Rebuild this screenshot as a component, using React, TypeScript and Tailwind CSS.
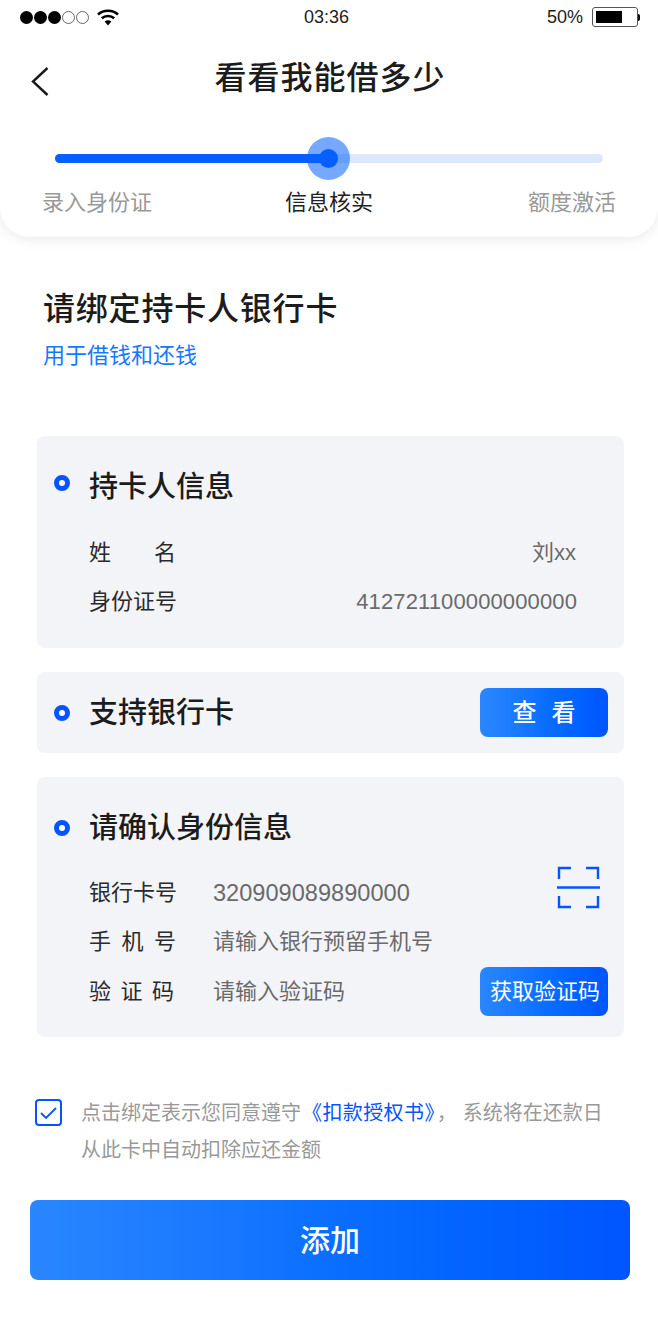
import React from 'react';

const font = 'font-["Liberation_Sans","Noto_Sans_CJK_SC",sans-serif]';

const SectionTitle = ({ children, dotClass = '' }: { children: React.ReactNode; dotClass?: string }) => (
  <div className="flex items-center h-10 pl-[17px]">
    <span className={`w-4 h-4 rounded-full border-[5px] border-[#0654ff] bg-white shrink-0 ${dotClass}`} />
    <span className="ml-[19px] text-[29px] leading-10 text-[#1c1c1c] font-medium">{children}</span>
  </div>
);

const GradientButton = ({ children }: { children: React.ReactNode }) => (
  <button className="flex items-center justify-center w-32 h-[49px] shrink-0 rounded-lg bg-gradient-to-r from-[#2a86ff] via-[#0a6fff] to-[#0055ff] text-white text-[22px] leading-none">
    {children}
  </button>
);

const Spaced = ({ chars, width }: { chars: string[]; width: string }) => (
  <span className={`flex justify-between text-[#2a2a2a] ${width}`}>
    {chars.map((c) => (
      <span key={c}>{c}</span>
    ))}
  </span>
);

const FormRow = ({ label, children, className = '' }: { label: React.ReactNode; children: React.ReactNode; className?: string }) => (
  <div className={`flex items-center h-[30px] pl-[52px] text-[22px] leading-[30px] ${className}`}>
    <span className="w-[124px] shrink-0 text-[#2a2a2a]">{label}</span>
    <span className="text-[#6a6a6a]">{children}</span>
  </div>
);

const App: React.FC = () => {
  return (
    <div className={`w-[658px] h-[1328px] overflow-hidden bg-white ${font}`}>
      {/* header card */}
      <div className="h-[237px] bg-white rounded-b-[30px] shadow-[0_2px_14px_rgba(0,0,0,0.09)]">
        <div className="relative flex items-center justify-between h-[34px] pl-5 pr-[18px] text-lg text-[#222]">
          <div className="flex items-center">
            <div className="flex gap-px">
              <span className="w-[13px] h-[13px] rounded-full bg-black" />
              <span className="w-[13px] h-[13px] rounded-full bg-black" />
              <span className="w-[13px] h-[13px] rounded-full bg-black" />
              <span className="w-[13px] h-[13px] rounded-full border border-[#666]" />
              <span className="w-[13px] h-[13px] rounded-full border border-[#666]" />
            </div>
            <svg className="ml-2" width="22" height="17" viewBox="0 0 22 17">
              <path d="M1 5.5C6.5.5 15.5.5 21 5.5" fill="none" stroke="#000" strokeWidth="2.6" />
              <path d="M4.8 9.3c3.4-3 9-3 12.4 0" fill="none" stroke="#000" strokeWidth="2.6" />
              <path d="M7.6 12.4 11 16.5l3.4-4.1c-2-1.5-4.8-1.5-6.8 0z" fill="#000" />
            </svg>
          </div>
          <span className="absolute left-[304px] top-[6px] leading-[22px]">03:36</span>
          <div className="flex items-center">
            <span className="leading-[22px] mr-[9px]">50%</span>
            <div className="w-[46px] h-5 p-[3px] rounded-[3px] border border-[#555]">
              <div className="w-[26px] h-full bg-black" />
            </div>
            <span className="w-[2px] h-[7px] bg-black rounded-r-sm" />
          </div>
        </div>

        <div className="relative h-[64px] mt-[12px] flex items-center justify-center">
          <svg className="absolute left-[30px] top-[20px]" width="20" height="30" viewBox="0 0 20 30" fill="none" stroke="#1a1a1a" strokeWidth="2.4">
            <path d="M17.5 2 3 15.5 17.5 29" />
          </svg>
          <h1 className="pl-[2px] text-[32px] leading-10 tracking-[1px] font-medium text-[#1c1c1c]">看看我能借多少</h1>
        </div>

        <div className="relative mx-[55px] mt-[27px] h-[43px] flex items-center">
          <div className="flex-1 h-[9px] rounded-full bg-[#dce8ff]">
            <div className="w-[274px] h-full rounded-l-full bg-[#0660ff]" />
          </div>
          <span className="absolute left-[252px] top-0 flex items-center justify-center w-[43px] h-[43px] rounded-full bg-[#0660ff]/55">
            <span className="w-[19px] h-[19px] rounded-full bg-[#0660ff]" />
          </span>
        </div>

        <div className="grid grid-cols-3 pl-[42px] pr-[42px] mt-2 text-[22px] leading-[30px] text-[#999]">
          <span>录入身份证</span>
          <span className="text-center text-[#222]">信息核实</span>
          <span className="text-right">额度激活</span>
        </div>
      </div>

      {/* form intro */}
      <div className="pl-[43px] pt-[52px]">
        <h2 className="text-[32px] leading-10 tracking-[.8px] font-medium text-[#1c1c1c]">请绑定持卡人银行卡</h2>
        <p className="mt-3 text-[22px] leading-[30px] text-[#1677ff]">用于借钱和还钱</p>
      </div>

      <div className="w-[587px] ml-[37px] mt-[65px] flex flex-col gap-6">
        <section className="h-[212px] pt-[31px] rounded-lg bg-[#f3f4f8]">
          <SectionTitle dotClass="-mt-2">持卡人信息</SectionTitle>
          <div className="flex justify-between items-center h-[30px] mt-[30px] pl-[52px] pr-[48px] text-[22px] text-[#6a6a6a]">
            <Spaced chars={['姓', '名']} width="w-[87px]" />
            <span>刘xx</span>
          </div>
          <div className="flex justify-between items-center h-[30px] mt-[19px] pl-[52px] pr-[47px] text-[22px] text-[#6a6a6a]">
            <span className="text-[#2a2a2a]">身份证号</span>
            <span className="tracking-[.12px]">412721100000000000</span>
          </div>
        </section>

        <section className="h-[81px] flex items-center justify-between pr-4 rounded-lg bg-[#f3f4f8]">
          <SectionTitle>支持银行卡</SectionTitle>
          <GradientButton>
            <span className="text-2xl font-medium mr-[15px]">查</span>
            <span className="text-2xl font-medium">看</span>
          </GradientButton>
        </section>

        <section className="relative h-[260px] pt-[31px] rounded-lg bg-[#f3f4f8]">
          <SectionTitle>请确认身份信息</SectionTitle>
          <svg className="absolute right-[23px] top-[89px]" width="45" height="43" viewBox="0 0 45 43" fill="none" stroke="#0654ff" strokeWidth="2.4">
            <path d="M3 13V2h12M30 2h12v11M3 30v11h12M30 41h12V30" />
            <path d="M1 21.5h43" />
          </svg>
          <FormRow label="银行卡号" className="mt-[30px]">
            <span className="text-[23.6px]">320909089890000</span>
          </FormRow>
          <FormRow label={<Spaced chars={['手', '机', '号']} width="w-[87px]" />} className="mt-[19px]">
            请输入银行预留手机号
          </FormRow>
          <div className="flex items-center justify-between mt-[10px] pr-4">
            <FormRow label={<Spaced chars={['验', '证', '码']} width="w-[85px]" />}>请输入验证码</FormRow>
            <GradientButton>
              <span className="pl-[2px]">获取验证码</span>
            </GradientButton>
          </div>
        </section>
      </div>

      {/* agreement */}
      <div className="flex mt-[58px] pl-[35px]">
        <span className="flex items-center justify-center w-[27px] h-[27px] mt-1 shrink-0 rounded-[4px] border-2 border-[#0654ff]">
          <svg width="17" height="12" viewBox="0 0 17 12" fill="none" stroke="#0654ff" strokeWidth="1.8">
            <path d="M1 6 6 11 16 1" />
          </svg>
        </span>
        <p className="ml-[19px] text-[20px] leading-[37px] text-[#999] whitespace-nowrap">
          点击绑定表示您同意遵守<span className="pl-px tracking-[.4px] text-[#0654ff]">《扣款授权书》</span>
          <span className="ml-[2px] mr-[6px]">，</span>系统将在还款日
          <br />
          从此卡中自动扣除应还金额
        </p>
      </div>

      <button className="block w-[600px] h-20 mx-[30px] mt-[31px] rounded-lg bg-gradient-to-r from-[#2a86ff] via-[#0a6fff] to-[#0055ff] text-white text-[30px] font-medium">
        添加
      </button>
    </div>
  );
};

export default App;
